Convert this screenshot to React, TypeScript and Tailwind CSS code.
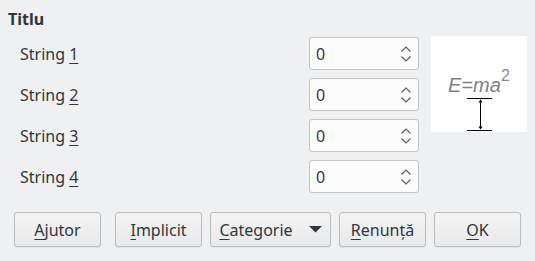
import React from "react";

const rows = ["1", "2", "3", "4"];

function SpinBox() {
  return (
    <div className="w-[110px] h-[33px] flex items-center justify-between rounded-[3px] border border-[#c3c4c5] bg-[#fcfcfc] pl-[6px] pr-[6px]">
      <span>0</span>
      <svg width="12" height="18" viewBox="0 0 12 18" fill="none" stroke="#5b5e61" strokeWidth="1.2">
        <path d="M1.5 6.5 L6 2 L10.5 6.5" />
        <path d="M1.5 11.5 L6 16 L10.5 11.5" />
      </svg>
    </div>
  );
}

function Preview() {
  return (
    <div className="w-[96px] h-[96px] bg-white -mt-px">
      <svg width="96" height="96" viewBox="0 0 96 96">
        <text x="17" y="56" fill="#808080" fontSize="20" fontStyle="italic" fontFamily="Liberation Sans, sans-serif">E=ma</text>
        <text x="70" y="45" fill="#8a8a8a" fontSize="16" fontFamily="Liberation Sans, sans-serif">2</text>
        <line x1="36" y1="62.5" x2="61" y2="62.5" stroke="#000" strokeWidth="1" />
        <line x1="36" y1="94.5" x2="61" y2="94.5" stroke="#000" strokeWidth="1" />
        <line x1="49.5" y1="64" x2="49.5" y2="93" stroke="#000" strokeWidth="1" />
        <path d="M47.5 66.5 L49.5 63.5 L51.5 66.5 Z" fill="#000" />
        <path d="M47.5 90.5 L49.5 93.5 L51.5 90.5 Z" fill="#000" />
      </svg>
    </div>
  );
}

function Button({ first, rest, width, drop }: { first: string; rest: string; width: string; drop?: boolean }) {
  return (
    <button
      className={`${width} h-[35px] flex items-center justify-center gap-[16px] rounded-[3px] border border-[#bbbcbe] bg-gradient-to-b from-[#f3f3f4] to-[#e8e9ea] shadow-[0_1px_1px_rgba(0,0,0,0.06)]`}
    >
      <span>
        <span className="underline underline-offset-[3px] decoration-1">{first}</span>
        {rest}
      </span>
      {drop && (
        <svg width="13" height="7" viewBox="0 0 13 7">
          <path d="M0 0 L13 0 L6.5 6.5 Z" fill="#31363b" />
        </svg>
      )}
    </button>
  );
}

export default function App() {
  return (
    <div
      className="w-[535px] h-[261px] bg-[#eff0f1] text-[#31363b] text-[16px] leading-[22px] pt-[8px]"
      style={{ fontFamily: "'Noto Sans', sans-serif" }}
    >
      <div className="pl-[8px] font-bold">Titlu</div>
      <div className="flex items-start mt-[7px] pl-[20px]">
        <div className="w-[399px] flex flex-col gap-[8px]">
          {rows.map((n) => (
            <div key={n} className="flex items-center justify-between h-[33px]">
              <span>
                String <span className="underline underline-offset-[3px] decoration-1">{n}</span>
              </span>
              <SpinBox />
            </div>
          ))}
        </div>
        <div className="ml-[12px]">
          <Preview />
        </div>
      </div>
      <div className="flex mt-[19px] pl-[14px]">
        <Button first="A" rest="jutor" width="w-[87px]" />
        <div className="flex gap-[8px] ml-[14px]">
          <Button first="I" rest="mplicit" width="w-[87px]" />
          <Button first="C" rest="ategorie" width="w-[121px]" drop />
          <Button first="R" rest="enunță" width="w-[87px]" />
          <Button first="O" rest="K" width="w-[87px]" />
        </div>
      </div>
    </div>
  );
}
